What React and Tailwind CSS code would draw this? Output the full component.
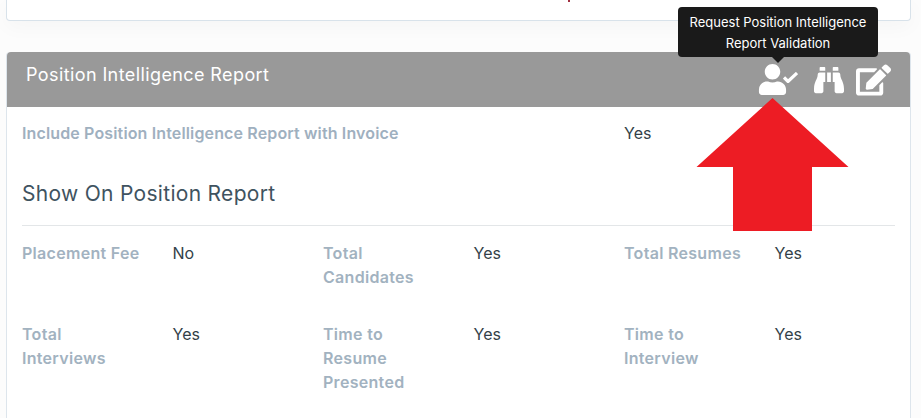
import React from 'react'
import { FaBinoculars, FaEdit, FaUser } from 'react-icons/fa'

const rows = [
  [
    ['Placement Fee', 'No'],
    ['Total Candidates', 'Yes'],
    ['Total Resumes', 'Yes'],
  ],
  [
    ['Total Interviews', 'Yes'],
    ['Time to Resume Presented', 'Yes'],
    ['Time to Interview', 'Yes'],
  ],
]

const font = { fontFamily: 'Inter, "Open Sans", sans-serif' }

function App() {
  return (
    <div className="relative h-[418px] w-[921px] overflow-hidden bg-[#fcfcfc] px-[6px] text-[16px] leading-6 text-[#333f48]" style={font}>
      {/* card cut off by the top of the window */}
      <div className="h-[21px] w-[905px] rounded-b-[4px] border border-t-0 border-[#d8e2ea] bg-white shadow-[0_6px_20px_rgba(0,0,0,0.03)]">
        {/* descender of the text cut off above */}
        <div className="ml-[561px] h-[2px] w-[2px] bg-[#a03040]"></div>
      </div>

      <div className="mt-[31px] h-[366px] w-[905px] rounded-t-[4px] border-x border-[#dde5ec] bg-white">
        <div className="flex h-[55px] items-center justify-between rounded-t-[4px] bg-[#999999] pl-[19px] pr-[19px] text-white">
          <h2 className="mb-[10px] text-[18px] font-normal tracking-[0.4px]">Position Intelligence Report</h2>
          <div className="flex items-center gap-[11px]">
            <span className="relative block h-[31px] w-[44px]">
              <FaUser className="h-[31px] w-[29px]" />
              <svg viewBox="0 0 15 11" className="absolute right-[4px] top-[8px] h-[11px] w-[15px]" fill="none" stroke="currentColor" strokeWidth="3.2">
                <path d="M1 5.500l4 4L14 1" />
              </svg>
            </span>
            <FaBinoculars className="h-[30px] w-[32px]" />
            <FaEdit className="h-[32px] w-[35px]" />
          </div>
        </div>

        <div className="px-[15px]">
          <div className="flex h-[53px] items-center pb-[2px]">
            <div className="w-[602px] font-semibold tracking-[0.14px] text-[#9fb0bf]">Include Position Intelligence Report with Invoice</div>
            <div>Yes</div>
          </div>

          <h3 className="border-b border-[#e3e6e8] pb-[16px] pt-[18px] text-[21px] font-normal leading-[31px] tracking-[0.3px] text-[#3f5360]">Show On Position Report</h3>

          <div className="w-[903px] pt-[15px]">
            {rows.map((row, i) => (
              <div key={i} className="grid grid-cols-3 pb-[33px]">
                {row.map(([label, value]) => (
                  <div key={label} className="grid grid-cols-2">
                    <div className="pr-[25px] font-semibold tracking-[0.3px] text-[#a2b2c0]">{label}</div>
                    <div>{value}</div>
                  </div>
                ))}
              </div>
            ))}
          </div>
        </div>
      </div>

      {/* tooltip over the first icon */}
      <div className="absolute left-[678px] top-[7px] w-[200px] rounded-[4px] bg-[#1a1a1a] pb-[3px] pt-[5px] text-center text-[13px] leading-[21px] text-white">
        Request Position Intelligence
        <br />
        Report Validation
        <div className="absolute left-[94px] top-full h-0 w-0 border-x-[6px] border-t-[6px] border-x-transparent border-t-[#1a1a1a]"></div>
      </div>

      {/* red arrow annotation */}
      <svg className="absolute left-[696px] top-[97px]" width="154" height="135" viewBox="0 0 154 135">
        <path d="M76.500 1 L152.500 70 L116 70 L116 134 L37 134 L37 70 L0.500 70 Z" fill="#ed1c24" />
      </svg>
    </div>
  )
}

export default App
